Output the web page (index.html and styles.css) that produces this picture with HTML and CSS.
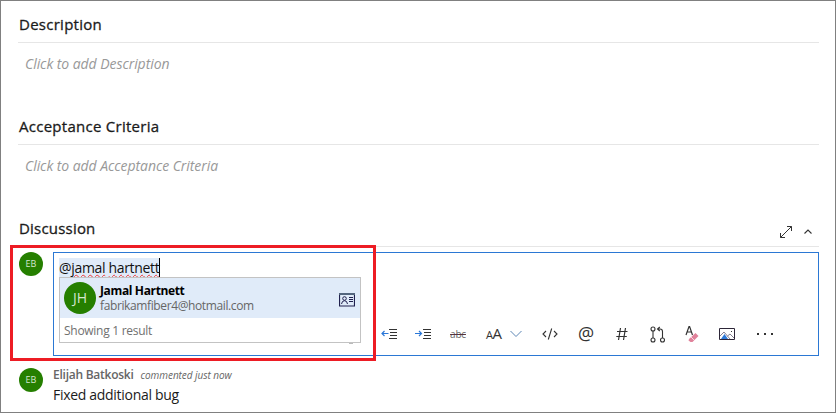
FILE: index.html
```html
<!DOCTYPE html>
<html lang="en">
<head>
<meta charset="utf-8">
<title>Work item</title>
<link rel="stylesheet" href="styles.css">
</head>
<body>
<main class="form">
  <section class="section">
    <header class="head"><h2>Description</h2></header>
    <p class="placeholder">Click to add Description</p>
  </section>
  <section class="section">
    <header class="head"><h2>Acceptance Criteria</h2></header>
    <p class="placeholder">Click to add Acceptance Criteria</p>
  </section>
  <section class="discussion">
    <header class="head">
      <h2>Discussion</h2>
      <div class="tools">
        <svg width="14" height="14" viewBox="0 0 14 14" fill="none" stroke="#333"><path d="M1.500 12.500l11-11M8 1.500h4.500V6M1.500 8v4.500H6"/></svg>
        <svg width="8" height="6" viewBox="0 0 8 6" fill="none" stroke="#333" stroke-width="1.100"><path d="M.5 4.500L4 1l3.500 3.500"/></svg>
      </div>
    </header>
    <div class="compose">
      <div class="avatar">EB</div>
      <div class="editor">
        <div class="input"><span class="mention">@<span class="misspelt">jamal</span> <span class="misspelt">hartnett</span></span></div>
        <div class="toolbar">
          <span class="under"></span>
          <svg width="16" height="12" viewBox="0 0 16 12" fill="none"><path d="M7.500 5.500H1M3.500 3L1 5.500 3.500 8" stroke="#2b78d8" stroke-width="1.200"/><path d="M8 1.500h8M9 4.500h7M9 7.500h7M8 10.500h8" stroke="#333"/></svg>
          <svg width="16" height="12" viewBox="0 0 16 12" fill="none"><path d="M0 5.500h6.500M4 3l2.500 2.500L4 8" stroke="#2b78d8" stroke-width="1.200"/><path d="M8 1.500h8M9 4.500h7M9 7.500h7M8 10.500h8" stroke="#333"/></svg>
          <span class="strike">abc</span>
          <span class="size"><span class="aa"><small>A</small>A</span><svg width="12" height="8" viewBox="0 0 12 8" fill="none" stroke="#5c86b5"><path d="M.5 1L6 6.500 11.500 1"/></svg></span>
          <svg width="16" height="14" viewBox="0 0 16 14" fill="none" stroke="#333" stroke-width="1.100"><path d="M4 4L1 7l3 3M12 4l3 3-3 3M9.700 1.500L6.300 12.500"/></svg>
          <span class="at">@</span>
          <svg width="12" height="14" viewBox="0 0 12 14" fill="none" stroke="#333" stroke-width="1.200"><path d="M4.500 1L2.500 13M9.500 1l-2 12M1 4.500h10.500M.3 9.500h10.500"/></svg>
          <svg width="16" height="17" viewBox="0 0 16 17" fill="none" stroke="#333" stroke-width="1.100"><circle cx="3" cy="3" r="2"/><circle cx="3" cy="14" r="2"/><circle cx="12.500" cy="14" r="2"/><path d="M3 5v7M12.500 12V5.500Q12.500 3 10 3H7.500M9.800 1L7.500 3l2.300 2"/></svg>
          <svg width="16" height="18" viewBox="0 0 16 18" fill="none"><path d="M2 10L5 1.500h.6L8.500 10M3 7h4.500" stroke="#333" stroke-width="1.200"/><path d="M5 14l6.500-6 3 3-6 6H6.500L4.500 15.500z" fill="#e0829b"/><path d="M7 12l3.500 3.500" stroke="#fff" stroke-width=".7"/></svg>
          <svg width="16" height="12" viewBox="0 0 16 12"><path d="M2 11l3.500-5L9 11z" fill="#2b78d8"/><path d="M1 8l4-4 6 7M8.500 8L11 6l4 4" fill="none" stroke="#665f75" stroke-width=".8"/><path d="M.5.5h15v11H.5z" fill="none" stroke="#2d2638"/><path d="M12 3h1v1h-1z" fill="#333"/></svg>
          <svg width="18" height="4" viewBox="0 0 18 4" fill="#333"><path d="M1 1h2v2H1zM8 1h2v2H8zM15 1h2v2h-2z"/></svg>
        </div>
        <div class="popup">
          <div class="person">
            <div class="avatar large">JH</div>
            <div class="who"><strong>Jamal Hartnett</strong><span>fabrikamfiber4@hotmail.com</span></div>
            <svg class="card" width="16" height="14" viewBox="0 0 16 14" fill="none" stroke="#20204e"><path d="M.5 1h15v12H.5z" stroke-width="1.200"/><path d="M0 1h16" stroke="#53657d" stroke-width="2"/><circle cx="5.500" cy="5.500" r="1.800"/><path d="M2.500 11Q3 7.700 5.500 7.700T8.500 11M10 4.500h4M10 6.500h4M10 8.500h4"/></svg>
          </div>
          <div class="count">Showing 1 result</div>
        </div>
      </div>
      <div class="callout"></div>
    </div>
    <article class="comment">
      <div class="avatar">EB</div>
      <div class="content">
        <div class="meta"><strong>Elijah Batkoski</strong><em>commented just now</em></div>
        <p>Fixed additional bug</p>
      </div>
    </article>
  </section>
</main>
</body>
</html>
```
FILE: styles.css
```css
* { box-sizing: border-box; }
body { margin: 0; background: #fff; font-family: "Open Sans", "Noto Sans", sans-serif; color: #1b1b1b; }
h2, p { margin: 0; }
svg { display: block; flex: none; }
.form { width: 836px; height: 413px; overflow: hidden; border: 1px solid #808080; padding: 0 16px 0 17px; }
.section { height: 102px; }
.head { height: 42px; border-bottom: 1px solid #e6e6e6; display: flex; justify-content: space-between; padding: 12px 0 0 1px; }
h2 { font-size: 15px; line-height: 22px; font-weight: 500; letter-spacing: .27px; -webkit-text-stroke: .3px #1b1b1b; white-space: nowrap; }
.discussion h2 { letter-spacing: .2px; }
.placeholder { font-size: 14px; line-height: 20px; font-style: italic; color: #999; padding: 11px 0 0 7px; letter-spacing: -.06px; white-space: nowrap; }
.tools { display: flex; gap: 11px; align-items: center; height: 28px; padding-right: 7px; margin-top: 1px; }
.compose { position: relative; display: flex; gap: 10px; margin-top: 5px; padding-left: 1px; }
.avatar { width: 24px; height: 24px; border-radius: 50%; background: #257f00; color: #d5e6cf; font-size: 9px; line-height: 24px; text-align: center; flex: none; }
.editor { position: relative; width: 766px; height: 104px; border: 1px solid #2b78d4; padding: 5px; display: flex; flex-direction: column; justify-content: space-between; }
.input { height: 19px; font-size: 14px; line-height: 20px; color: #111; }
.mention { display: inline-block; width: 101px; height: 19px; background: #e0ebf9; border-right: 1px solid #000; white-space: nowrap; letter-spacing: -.33px; }
.misspelt { text-decoration: underline wavy #e33 1px; text-underline-offset: 1px; text-decoration-skip-ink: none; }
.toolbar { display: grid; grid-template-columns: 34px 34px 34px 36px 56px 36px 36px 36px 36px 32px 38px 38px; padding-left: 279px; height: 32px; align-items: center; justify-items: center; }
.under { width: 4px; height: 26px; border-bottom: 1px solid #bbb; align-self: start; margin: 0 0 0 -8px; }
.strike { font-size: 10px; line-height: 12px; color: #666; text-decoration: line-through #55333d 1px; letter-spacing: -.2px; }
.size { display: flex; gap: 7px; align-items: center; }
.aa { width: 17px; font-size: 15px; line-height: 18px; color: #333; letter-spacing: -.5px; white-space: nowrap; }
.aa small { font-size: 11px; }
.at { font-size: 18px; line-height: 18px; color: #333; margin-top: -3px; }
.popup { position: absolute; left: 5px; top: 24px; width: 302px; height: 66px; background: #fff; border: 1px solid #c3c3c3; }
.person { height: 40px; display: flex; align-items: center; background: #e0ebf9; padding: 0 5px 0 4px; }
.large { width: 32px; height: 32px; font-size: 14px; line-height: 32px; }
.who { flex: 1; margin-left: 4px; display: flex; flex-direction: column; font-size: 12px; line-height: 15px; white-space: nowrap; }
.who strong { font-size: 12px; color: #000; letter-spacing: -.36px; }
.who span { color: #666; letter-spacing: -.38px; }
.card { margin-top: 3px; }
.count { font-size: 12px; line-height: 26px; color: #707070; padding-left: 4px; letter-spacing: -.28px; }
.callout { position: absolute; left: -8px; top: -7px; width: 366px; height: 116px; border: 3px solid #ed1c24; }
.comment { display: flex; gap: 10px; margin-top: 10px; padding: 2px 0 0 1px; }
.content { margin-top: -3px; }
.meta { display: flex; gap: 7px; align-items: baseline; white-space: nowrap; color: #666; line-height: 19px; }
.meta strong { font-size: 12px; font-weight: 600; letter-spacing: -.25px; }
.meta em { font-size: 10px; letter-spacing: -.05px; }
.content p { font-size: 14px; line-height: 20px; white-space: nowrap; letter-spacing: -.3px; }
```
